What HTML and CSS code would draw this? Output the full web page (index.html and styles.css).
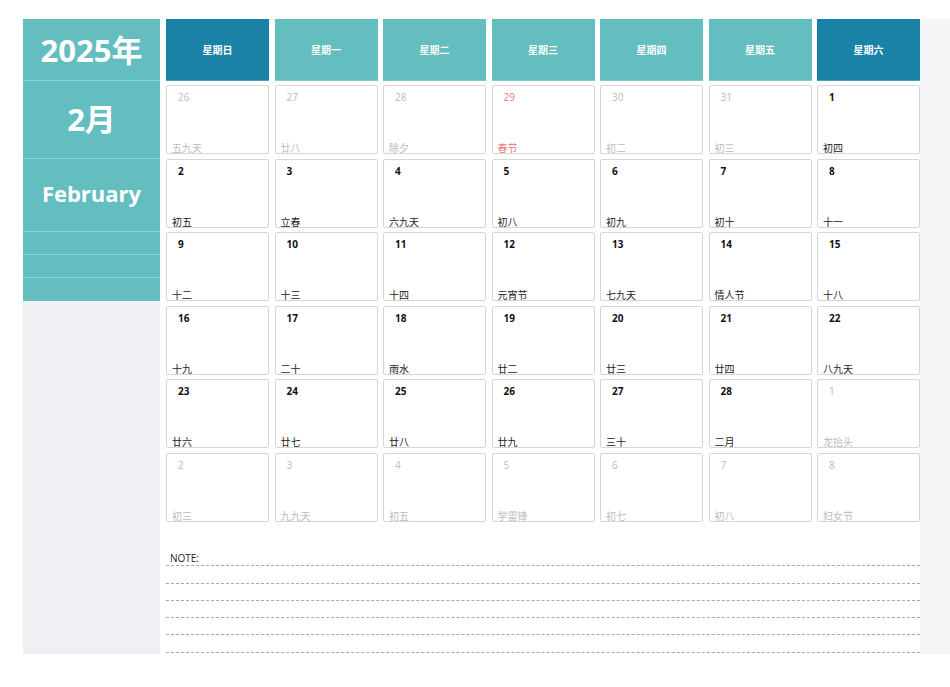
FILE: index.html
```html
<!DOCTYPE html>
<html>
<head>
    <meta charset="utf-8">
    <title>2025年2月 日历</title>
    <link rel="stylesheet" href="styles.css">
</head>
<body>
<div class="sheet">
    <div class="side">
        <div class="side-top">
            <div class="year">2025年</div>
            <div class="month">2月</div>
            <div class="en">February</div>
            <div class="blank"></div>
            <div class="blank"></div>
            <div class="blank"></div>
        </div>
    </div>
    <div class="main">
        <div class="grid">
            <div class="head dark">星期日</div>
            <div class="head">星期一</div>
            <div class="head">星期二</div>
            <div class="head">星期三</div>
            <div class="head">星期四</div>
            <div class="head">星期五</div>
            <div class="head dark">星期六</div>

            <div class="day other"><span class="num">26</span><span class="lunar">五九天</span></div>
            <div class="day other"><span class="num">27</span><span class="lunar">廿八</span></div>
            <div class="day other"><span class="num">28</span><span class="lunar">除夕</span></div>
            <div class="day other red"><span class="num">29</span><span class="lunar">春节</span></div>
            <div class="day other"><span class="num">30</span><span class="lunar">初二</span></div>
            <div class="day other"><span class="num">31</span><span class="lunar">初三</span></div>
            <div class="day"><span class="num">1</span><span class="lunar">初四</span></div>

            <div class="day"><span class="num">2</span><span class="lunar">初五</span></div>
            <div class="day"><span class="num">3</span><span class="lunar">立春</span></div>
            <div class="day"><span class="num">4</span><span class="lunar">六九天</span></div>
            <div class="day"><span class="num">5</span><span class="lunar">初八</span></div>
            <div class="day"><span class="num">6</span><span class="lunar">初九</span></div>
            <div class="day"><span class="num">7</span><span class="lunar">初十</span></div>
            <div class="day"><span class="num">8</span><span class="lunar">十一</span></div>

            <div class="day"><span class="num">9</span><span class="lunar">十二</span></div>
            <div class="day"><span class="num">10</span><span class="lunar">十三</span></div>
            <div class="day"><span class="num">11</span><span class="lunar">十四</span></div>
            <div class="day"><span class="num">12</span><span class="lunar">元宵节</span></div>
            <div class="day"><span class="num">13</span><span class="lunar">七九天</span></div>
            <div class="day"><span class="num">14</span><span class="lunar">情人节</span></div>
            <div class="day"><span class="num">15</span><span class="lunar">十八</span></div>

            <div class="day"><span class="num">16</span><span class="lunar">十九</span></div>
            <div class="day"><span class="num">17</span><span class="lunar">二十</span></div>
            <div class="day"><span class="num">18</span><span class="lunar">雨水</span></div>
            <div class="day"><span class="num">19</span><span class="lunar">廿二</span></div>
            <div class="day"><span class="num">20</span><span class="lunar">廿三</span></div>
            <div class="day"><span class="num">21</span><span class="lunar">廿四</span></div>
            <div class="day"><span class="num">22</span><span class="lunar">八九天</span></div>

            <div class="day"><span class="num">23</span><span class="lunar">廿六</span></div>
            <div class="day"><span class="num">24</span><span class="lunar">廿七</span></div>
            <div class="day"><span class="num">25</span><span class="lunar">廿八</span></div>
            <div class="day"><span class="num">26</span><span class="lunar">廿九</span></div>
            <div class="day"><span class="num">27</span><span class="lunar">三十</span></div>
            <div class="day"><span class="num">28</span><span class="lunar">二月</span></div>
            <div class="day other"><span class="num">1</span><span class="lunar">龙抬头</span></div>

            <div class="day other"><span class="num">2</span><span class="lunar">初三</span></div>
            <div class="day other"><span class="num">3</span><span class="lunar">九九天</span></div>
            <div class="day other"><span class="num">4</span><span class="lunar">初五</span></div>
            <div class="day other"><span class="num">5</span><span class="lunar">学雷锋</span></div>
            <div class="day other"><span class="num">6</span><span class="lunar">初七</span></div>
            <div class="day other"><span class="num">7</span><span class="lunar">初八</span></div>
            <div class="day other"><span class="num">8</span><span class="lunar">妇女节</span></div>
        </div>
        <div class="note">
            <div class="line"><span>NOTE:</span></div>
            <div class="line"></div>
            <div class="line"></div>
            <div class="line"></div>
            <div class="line"></div>
            <div class="line"></div>
        </div>
    </div>
    <div class="edge"></div>
</div>
</body>
</html>
```

FILE: styles.css
```css
* {
    margin: 0px;
    padding: 0px;
    box-sizing: border-box;
}
body {
    background: #fff;
    font-family: "Open Sans", "Noto Sans CJK SC", sans-serif;
}
.sheet {
    display: flex;
    margin: 19px 0 0 23px;
    width: 927px;
    height: 635px;
}
.side {
    width: 137px;
    background: #efeff4;
}
.side-top {
    background: #64bdbe;
    color: #fff;
    font-weight: bold;
    text-align: center;
}
.year {
    height: 62px;
    line-height: 62px;
    font-size: 31px;
    border-bottom: 1px solid #8dd1d1;
}
.month {
    height: 78px;
    line-height: 76px;
    font-size: 31px;
    border-bottom: 1px solid #8dd1d1;
}
.en {
    height: 73px;
    line-height: 68px;
    font-size: 22px;
    border-bottom: 1px solid #8dd1d1;
}
.blank {
    height: 23px;
    border-bottom: 1px solid #8dd1d1;
}
.blank:last-child {
    border-bottom: none;
}
.main {
    width: 760px;
    padding-left: 6px;
    background: #fff;
}
.edge {
    width: 30px;
    background: #f5f5f8;
}
.grid {
    display: grid;
    grid-template-columns: repeat(7, 103px);
    grid-template-rows: 62px repeat(6, 69.3px);
    column-gap: 5.5px;
    row-gap: 4.2px;
}
.head {
    background: #64bdbe;
    color: #fff;
    font-size: 10px;
    font-weight: bold;
    display: flex;
    align-items: center;
    justify-content: center;
    border-bottom: 1px solid #7fcaca;
}
.head.dark {
    background: #1a82a6;
    border-bottom-color: #4aa0bd;
}
.day {
    border: 1.5px solid #d6d6d6;
    border-radius: 2px;
    display: flex;
    flex-direction: column;
    justify-content: space-between;
    color: #111;
}
.num {
    padding: 4px 0 0 11px;
    font-size: 10px;
    font-weight: bold;
    line-height: 14px;
}
.lunar {
    padding-left: 5px;
    font-size: 10px;
    line-height: 10px;
    color: #222;
}
.other .num {
    font-weight: normal;
    color: #bbb;
}
.other .lunar {
    color: #bbb;
}
.red .num,
.red .lunar {
    color: #ea7b78;
}
.note {
    margin-top: 27px;
}
.line {
    height: 17.3px;
    border-bottom: 1px dashed #a9a9a9;
    font-size: 10px;
    color: #222;
    padding-left: 4px;
    line-height: 14px;
    padding-top: 2px;
}
```
